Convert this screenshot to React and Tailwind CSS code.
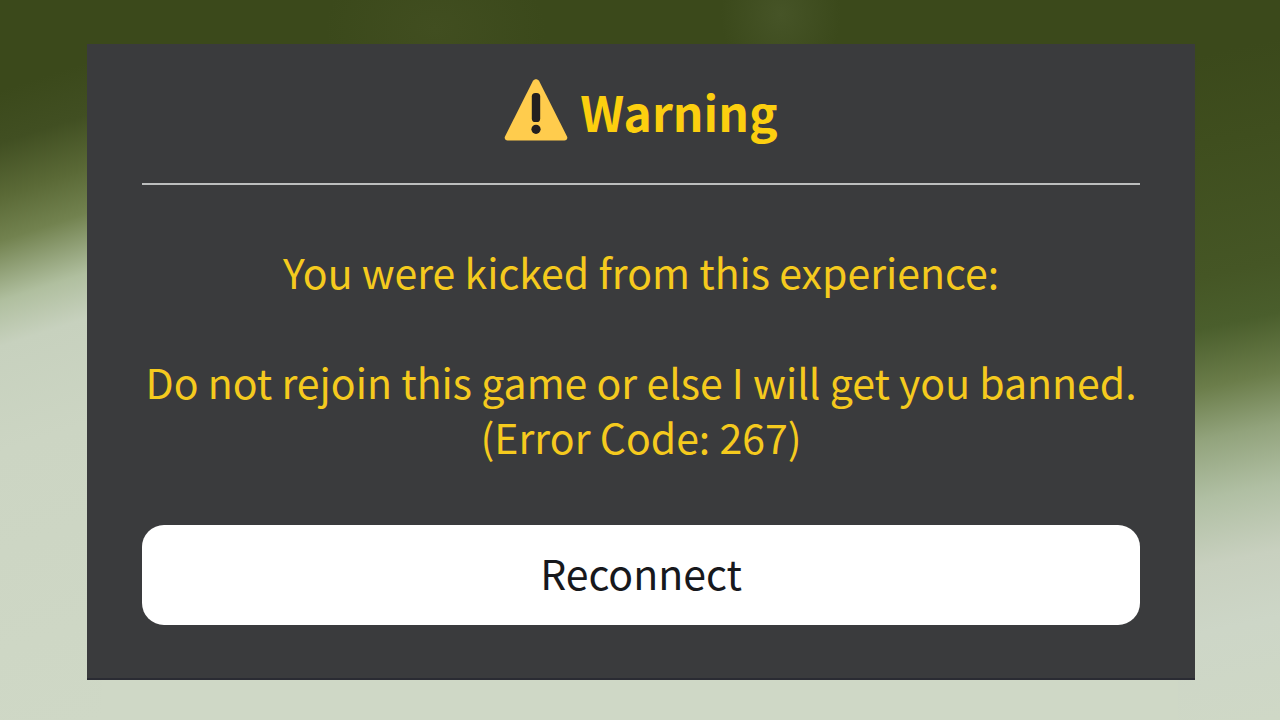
const WarningIcon = () => (
  <svg viewBox="0 0 64 62" className="h-[62px] w-16 shrink-0" aria-hidden="true">
    <path
      d="M29 1.8C30.3 -0.3 33.7 -0.3 35 1.8L63 57.4C64 59.6 62.6 61.5 60.4 61.5H3.6C1.4 61.5 0 59.6 1 57.4Z"
      fill="#ffcc4d"
    />
    <rect x="27.8" y="14" width="8.4" height="29" rx="3.6" fill="#231f20" />
    <circle cx="32" cy="50.3" r="4.6" fill="#231f20" />
  </svg>
);

const messageLines = [
  "You were kicked from this experience:",
  "",
  "Do not rejoin this game or else I will get you banned.",
  "(Error Code: 267)",
];

const ErrorPrompt = ({ title, lines, onReconnect }) => {
  return (
    <section
      role="alertdialog"
      aria-labelledby="prompt-title"
      aria-describedby="prompt-message"
      className="flex w-full flex-col border-b-2 border-[#2a2b33] bg-[#3a3b3d] px-[55px] pb-[53px]"
    >
      <header className="flex items-start justify-center gap-3 border-b-2 border-[#bcbebe] pt-[35px] pb-10">
        <WarningIcon />
        <h1
          id="prompt-title"
          className="text-[48px] leading-[64px] font-bold text-[#fccf0f]"
        >
          {title}
        </h1>
      </header>

      <div
        id="prompt-message"
        className="pt-[59px] pb-[61px] text-center text-[41px] leading-[55px] text-[#f5ca1e]"
      >
        {lines.map((line, i) => (
          <p key={i} className="min-h-[55px]">
            {line}
          </p>
        ))}
      </div>

      <button
        type="button"
        onClick={onReconnect}
        className="h-[100px] w-full cursor-pointer rounded-[22px] bg-white pb-1 text-[41px] text-[#17181c] hover:bg-gray-100"
      >
        Reconnect
      </button>
    </section>
  );
};

const Backdrop = ({ children }) => (
  <main
    className="flex min-h-screen items-start bg-no-repeat pt-11 pr-[85px] pb-10 pl-[87px] font-['Noto_Sans_CJK_SC','Open_Sans',sans-serif]
      bg-[radial-gradient(ellipse_60px_70px_at_61%_2%,#465427,transparent),radial-gradient(ellipse_110px_80px_at_34%_4%,#414e20,transparent),linear-gradient(162deg,#3b491b_12%,#414f22_19%,#5a6936_26%,#72824f_32%,#b0bf9f_40%,#c7d1be_46%,#ccd5c3_60%,#cfd8c6_100%),linear-gradient(168deg,#3b491b_8%,#3f4e1e_20%,#455625_38%,#4a5e2c_45%,#6b7d4a_53%,#92a37c_60%,#b0bfa3_68%,#c8d0bf_77%,#cdd6c7_86%,#cfd8c6_100%),linear-gradient(180deg,#3b491b_10%,#cfd8c6_90%)]
      bg-size-[auto,auto,8%_100%,8%_100%,100%_100%]
      bg-position-[0_0,0_0,left_top,right_top,0_0]"
  >
    {children}
  </main>
);

const App = () => {
  return (
    <Backdrop>
      <ErrorPrompt
        title="Warning"
        lines={messageLines}
        onReconnect={() => window.location.reload()}
      />
    </Backdrop>
  );
};

export default App;
